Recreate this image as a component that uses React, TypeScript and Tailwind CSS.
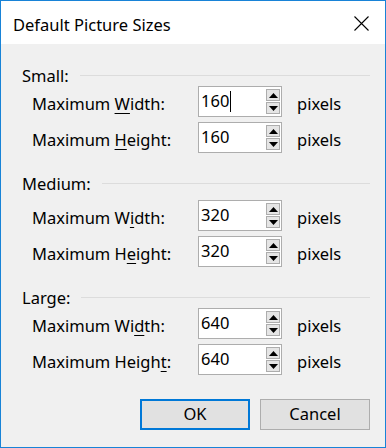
import React from "react"

function Spinner() {
  return (
    <div className="flex h-full w-[14px] flex-col gap-[1px] py-[2px]">
      <div className="flex flex-1 items-center justify-center border border-[#adadad] bg-[#e5e5e5]">
        <svg width="9" height="5" viewBox="0 0 9 5">
          <polygon points="0,5 4.5,0 9,5" fill="#000" />
        </svg>
      </div>
      <div className="flex flex-1 items-center justify-center border border-[#adadad] bg-[#e5e5e5]">
        <svg width="9" height="5" viewBox="0 0 9 5">
          <polygon points="0,0 9,0 4.5,5" fill="#000" />
        </svg>
      </div>
    </div>
  )
}

function Field({
  pre,
  key1,
  post,
  value,
  caret,
}: {
  pre: string
  key1: string
  post: string
  value: string
  caret?: boolean
}) {
  return (
    <div className="flex h-[31px] items-center">
      <div className="mt-[6px] w-[197px] shrink-0 pl-[31px]">
        {pre}
        <span className="underline decoration-1 underline-offset-[3px]">{key1}</span>
        {post}
      </div>
      <div className="flex h-[31px] w-[84px] shrink-0 items-stretch border border-[#adadad] bg-white pr-[1px]">
        <div className="flex flex-1 items-center pl-[2px]">
          <span>{value}</span>
          {caret && <span className="ml-[1px] h-[21px] w-[1px] bg-black" />}
        </div>
        <Spinner />
      </div>
      <div className="ml-[15px] mt-[6px]">pixels</div>
    </div>
  )
}

function Group({ title }: { title: string }) {
  return (
    <div className="flex h-[20px] items-center pl-[21px] pr-[15px]">
      <span className="mt-[3px]">{title}</span>
      <div className="ml-[11px] h-[1px] flex-1 bg-[#dcdcdc]" />
    </div>
  )
}

export default function App() {
  return (
    <div
      className="flex h-[448px] w-[386px] flex-col border border-[#1883d7] bg-[#f0f0f0] text-[16.5px] text-black"
      style={{ fontFamily: '"Noto Sans", "Open Sans", sans-serif' }}
    >
      <div className="flex h-[43px] items-center justify-between bg-white pl-[12px] pr-[16px]">
        <span className="mt-[5px]">Default Picture Sizes</span>
        <svg width="15" height="15" viewBox="0 0 15 15" className="mt-[1px]">
          <path d="M0.5 0.5 L14.5 14.5 M14.5 0.5 L0.5 14.5" stroke="#000" strokeWidth="1.1" />
        </svg>
      </div>

      <div className="flex flex-1 flex-col">
        <div className="mt-[21px]">
          <Group title="Small:" />
          <div className="mt-[1px] flex flex-col gap-[5px]">
            <Field pre="Maximum " key1="W" post="idth:" value="160" caret />
            <Field pre="Maximum " key1="H" post="eight:" value="160" />
          </div>
        </div>

        <div className="mt-[20px]">
          <Group title="Medium:" />
          <div className="mt-[7px] flex flex-col gap-[5px]">
            <Field pre="Maximum W" key1="i" post="dth:" value="320" />
            <Field pre="Maximum H" key1="e" post="ight:" value="320" />
          </div>
        </div>

        <div className="mt-[20px]">
          <Group title="Large:" />
          <div className="mt-[1px] flex flex-col gap-[5px]">
            <Field pre="Maximum Wi" key1="d" post="th:" value="640" />
            <Field pre="Maximum Heigh" key1="t" post=":" value="640" />
          </div>
        </div>

        <div className="mt-[24px] flex justify-end gap-[10px] pr-[15px]">
          <button className="flex h-[31px] w-[110px] items-center justify-center border-2 border-[#0078d7] bg-[#e1e1e1]">
            OK
          </button>
          <button className="flex h-[31px] w-[110px] items-center justify-center border border-[#adadad] bg-[#e1e1e1]">
            Cancel
          </button>
        </div>
      </div>
    </div>
  )
}
